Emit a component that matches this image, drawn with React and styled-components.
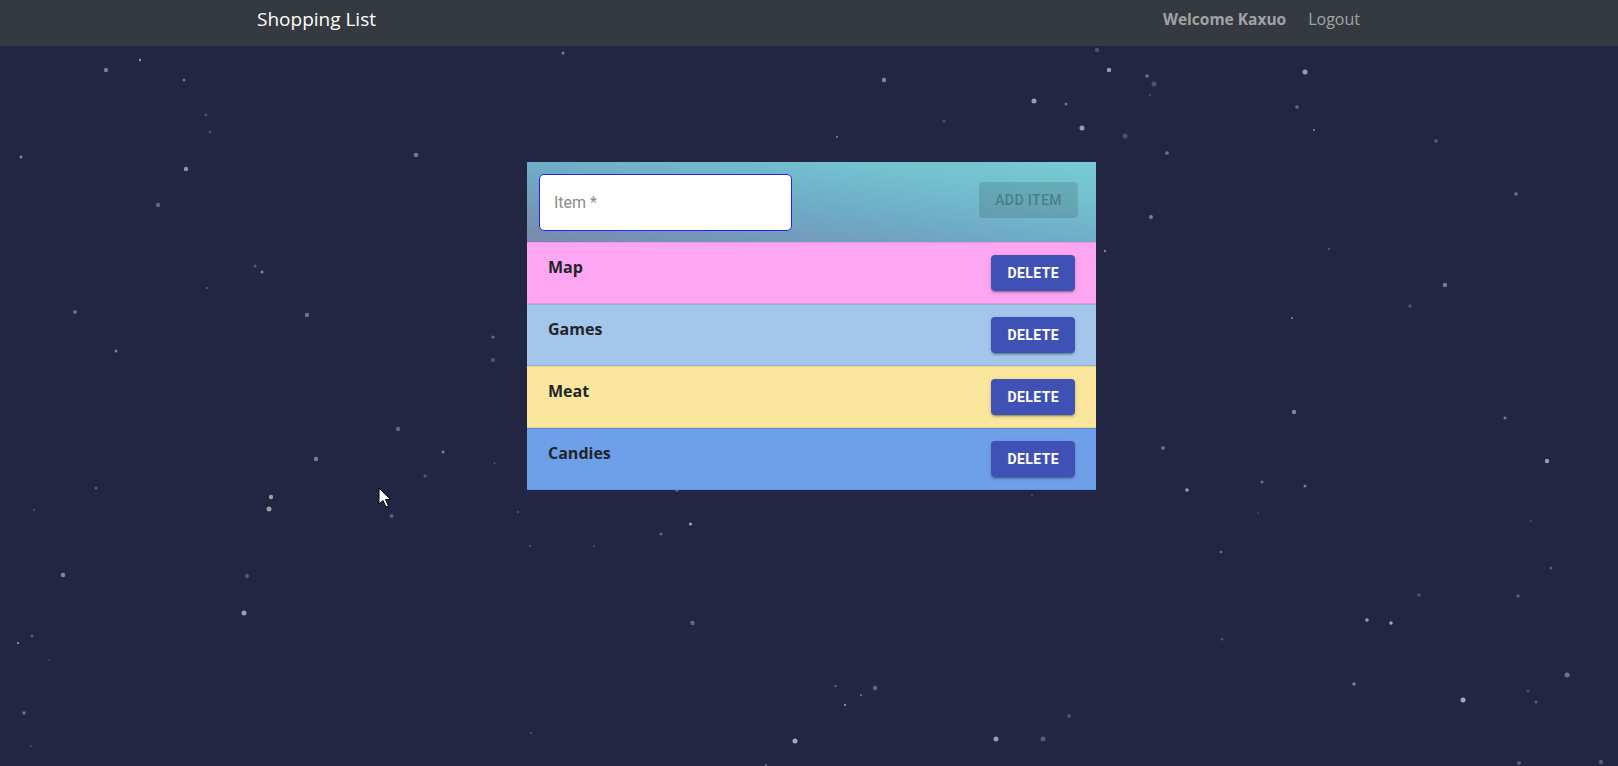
import React from "react";
import styled, { createGlobalStyle } from "styled-components";

const GlobalStyle = createGlobalStyle`
  html, body {
    margin: 0;
    padding: 0;
    background: #232642;
    min-height: 100%;
  }
  body {
    font-family: "Open Sans", "Liberation Sans", sans-serif;
  }
  * { box-sizing: border-box; }
`;

const STARS = [
  [140, 60, 1.2, 0.5], [106, 70, 2.2, 0.4], [184, 80, 1.5, 0.35], [206, 115, 1.5, 0.2],
  [210, 132, 1.3, 0.2], [21, 157, 1.5, 0.45], [186, 169, 2.2, 0.5], [158, 205, 2.2, 0.3],
  [416, 155, 2.2, 0.4], [563, 53, 1.5, 0.4], [255, 266, 1.5, 0.25], [262, 272, 1.5, 0.45],
  [207, 288, 0.8, 0.4], [75, 312, 1.8, 0.4], [307, 315, 2.2, 0.35], [493, 337, 1.5, 0.35],
  [884, 80, 2.2, 0.45], [1034, 101, 2.5, 0.55], [1066, 104, 1.5, 0.35], [944, 121, 1.5, 0.18],
  [837, 137, 1, 0.45],
  [1097, 50, 2.2, 0.2], [1109, 70, 2.2, 0.55], [1147, 76, 1.8, 0.35], [1154, 84, 2.5, 0.2],
  [1150, 95, 1, 0.2], [1305, 72, 2.5, 0.55], [1297, 107, 1.8, 0.3], [1314, 130, 1, 0.45],
  [1082, 128, 2.5, 0.55], [1125, 136, 2.5, 0.2], [1167, 153, 1.8, 0.35], [1436, 141, 1.8, 0.25],
  [1516, 194, 1.8, 0.35], [1151, 217, 2, 0.4], [1105, 251, 1.3, 0.4], [1329, 249, 1.3, 0.2],
  [1445, 285, 2.2, 0.4], [1410, 306, 1.8, 0.2], [1292, 318, 1, 0.45],
  [1294, 412, 2.2, 0.45], [1505, 418, 1.5, 0.4], [1163, 448, 1.8, 0.4], [1547, 461, 2.2, 0.55],
  [1262, 482, 1.5, 0.35], [1305, 486, 1.5, 0.4], [1187, 490, 1.8, 0.55], [1258, 513, 0.8, 0.2],
  [1531, 521, 0.8, 0.3], [1221, 552, 1.2, 0.35], [1551, 568, 1.5, 0.25], [1419, 595, 1.8, 0.2],
  [1518, 596, 1.8, 0.25], [1367, 620, 1.8, 0.55], [1391, 623, 1.8, 0.6], [1222, 639, 1.5, 0.2],
  [1567, 675, 2.5, 0.35], [1354, 684, 1.8, 0.4], [1528, 691, 1.5, 0.2], [1463, 700, 2.5, 0.6],
  [1536, 702, 1.5, 0.25], [1519, 763, 2, 0.25], [1601, 762, 2.2, 0.25],
  [116, 351, 1.5, 0.4], [493, 360, 2.2, 0.2], [398, 429, 2.2, 0.3], [443, 452, 1.5, 0.4],
  [316, 459, 2.2, 0.4], [494.5, 463, 0.8, 0.35], [425, 476, 1.5, 0.25], [96, 488, 1.5, 0.25],
  [271, 497, 2.2, 0.55], [269, 509, 2.5, 0.55], [34, 510, 0.8, 0.4], [391.5, 516, 2, 0.25],
  [518, 512, 0.8, 0.4], [530, 546, 0.8, 0.45], [63, 575, 2.2, 0.45], [247, 576, 2, 0.25],
  [244, 613, 2.5, 0.55], [32, 636, 1.5, 0.25], [18, 643, 1, 0.6], [49, 660, 1, 0.15],
  [24, 713, 1.8, 0.35], [31, 746, 0.8, 0.3], [531, 733, 0.8, 0.35],
  [677, 490, 1.5, 0.4], [1032, 495, 0.8, 0.3], [690.5, 524, 1.5, 0.6], [661, 534, 1.5, 0.3],
  [594, 546, 0.8, 0.35], [692.5, 623, 2.2, 0.3], [835.5, 686, 1.3, 0.25], [875, 688, 2.2, 0.3],
  [861, 695, 1, 0.4], [845, 705, 1, 0.6], [1069, 716, 2, 0.2], [795, 741, 2.5, 0.6],
  [996, 739, 2.5, 0.55], [1043, 739, 2.5, 0.25], [766, 765, 1, 0.4],
];

const ITEMS = [
  { name: "Map", bg: "#fea6f1" },
  { name: "Games", bg: "#a4c6eb" },
  { name: "Meat", bg: "#fae69d" },
  { name: "Candies", bg: "#6ea0ea" },
];

const Page = styled.div`
  position: relative;
  min-height: 766px;
  background: #232642;
  overflow: hidden;
`;

const StarField = styled.svg`
  position: absolute;
  inset: 0;
  width: 100%;
  height: 100%;
  pointer-events: none;
  z-index: 0;
`;

const Navbar = styled.nav`
  position: relative;
  z-index: 1;
  height: 46px;
  background: #343a40;
`;

const NavInner = styled.div`
  max-width: 1140px;
  height: 100%;
  margin: 0 auto;
  padding: 4px 15px 12px 18px;
  display: flex;
  align-items: center;
  justify-content: space-between;
`;

const Brand = styled.a`
  font-size: 19px;
  line-height: 30px;
  color: #ffffff;
  text-decoration: none;
`;

const NavRight = styled.div`
  display: flex;
  align-items: center;
`;

const Welcome = styled.span`
  font-weight: 700;
  font-size: 15.5px;
  line-height: 30px;
  color: rgba(255, 255, 255, 0.55);
  margin-right: 14px;
`;

const NavLink = styled.a`
  font-size: 16px;
  line-height: 30px;
  padding: 0 4px 0 8px;
  color: rgba(255, 255, 255, 0.55);
  text-decoration: none;
`;

const Main = styled.main`
  position: relative;
  z-index: 1;
  display: flex;
  justify-content: center;
  padding: 116px 0 0 5px;
`;

const Card = styled.section`
  width: 569px;
`;

const AddForm = styled.form`
  display: flex;
  align-items: center;
  justify-content: space-between;
  padding: 12px 18px 11px 12px;
  background: linear-gradient(to top right, #7989ab 0%, #6faac6 45%, #73c0cf 75%, #78cbd2 100%);
`;

const ItemInput = styled.input`
  width: 253px;
  height: 57px;
  border: 1px solid #2424e6;
  border-radius: 5px;
  padding: 0 14px;
  background: #ffffff;
  font-family: Roboto, "Liberation Sans", sans-serif;
  font-size: 16px;
  color: #333;
  outline: none;
  &::placeholder {
    color: #8c8c8c;
  }
`;

const AddButton = styled.button`
  height: 36px;
  padding: 0 16px;
  margin-bottom: 6px;
  border: none;
  border-radius: 4px;
  background: rgba(0, 0, 0, 0.12);
  color: rgba(0, 0, 0, 0.26);
  font-family: Roboto, "Liberation Sans", sans-serif;
  font-weight: 500;
  font-size: 14px;
  letter-spacing: 0.03em;
  text-transform: uppercase;
`;

const List = styled.ul`
  list-style: none;
  margin: 0;
  padding: 0;
`;

const Row = styled.li`
  display: flex;
  align-items: flex-start;
  justify-content: space-between;
  padding: 12px 21px;
  background: ${(p) => p.$bg};
  border-top: 1px solid rgba(0, 0, 0, 0.09);
  border-bottom: 1px solid rgba(0, 0, 0, 0.09);
`;

const ItemName = styled.span`
  font-weight: 700;
  font-size: 16px;
  line-height: 24px;
  color: #212529;
`;

const DeleteButton = styled.button`
  height: 36px;
  padding: 0 16px;
  border: none;
  border-radius: 4px;
  background: #3f51b5;
  color: #ffffff;
  font-family: Roboto, "Liberation Sans", sans-serif;
  font-weight: 700;
  font-size: 14px;
  letter-spacing: 0.02857em;
  text-transform: uppercase;
  box-shadow: 0 3px 1px -2px rgba(0, 0, 0, 0.2), 0 2px 2px 0 rgba(0, 0, 0, 0.14),
    0 1px 5px 0 rgba(0, 0, 0, 0.12);
`;

export default function App() {
  return (
    <Page>
      <GlobalStyle />
      <StarField viewBox="0 0 1618 766" preserveAspectRatio="xMinYMin slice">
        {STARS.map(([x, y, r, a], i) => (
          <circle key={i} cx={x} cy={y} r={r} fill="#ffffff" fillOpacity={a} />
        ))}
        <path
          d="M379 488 L379 504 L383 500.5 L386 507 L388.5 506 L385.5 499.5 L390.5 499.5 Z"
          fill="#ffffff"
          stroke="#000000"
          strokeWidth="1"
          strokeLinejoin="miter"
        />
      </StarField>
      <Navbar>
        <NavInner>
          <Brand href="#">Shopping List</Brand>
          <NavRight>
            <Welcome>Welcome Kaxuo</Welcome>
            <NavLink href="#">Logout</NavLink>
          </NavRight>
        </NavInner>
      </Navbar>
      <Main>
        <Card>
          <AddForm onSubmit={(e) => e.preventDefault()}>
            <ItemInput placeholder="Item *" />
            <AddButton type="submit" disabled>
              Add Item
            </AddButton>
          </AddForm>
          <List>
            {ITEMS.map((it) => (
              <Row key={it.name} $bg={it.bg}>
                <ItemName>{it.name}</ItemName>
                <DeleteButton type="button">Delete</DeleteButton>
              </Row>
            ))}
          </List>
        </Card>
      </Main>
    </Page>
  );
}
